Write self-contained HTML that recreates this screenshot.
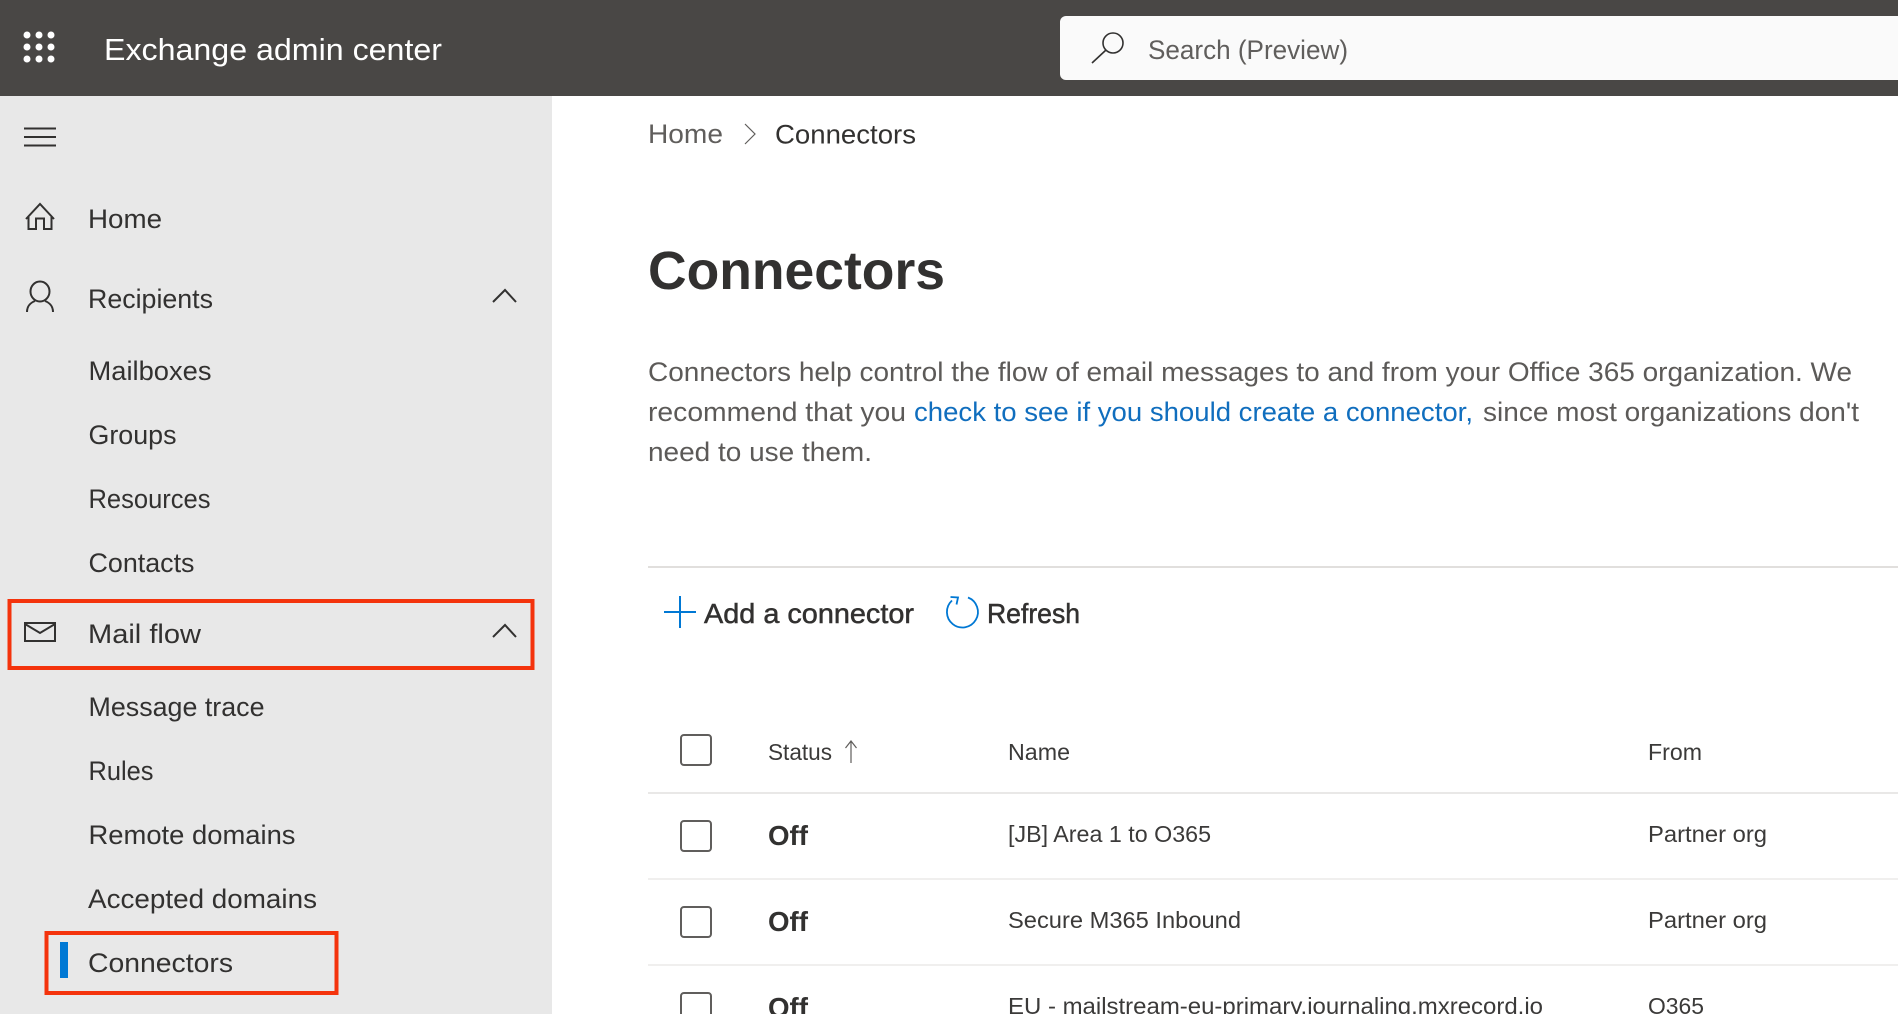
<!DOCTYPE html>
<html><head><meta charset="utf-8"><title>Exchange admin center</title>
<style>
html,body{margin:0;padding:0;width:1898px;height:1014px;overflow:hidden;background:#fff}
svg{display:block}
text{font-family:"Liberation Sans",sans-serif;}
.n{font-size:27px;fill:#323130}
.p{font-size:27px;fill:#5c5a58}
.t{font-size:23px;fill:#3b3a39}
.s{font-size:28px;fill:#323130;font-weight:bold}
.i{fill:none;stroke:#323130;stroke-width:2}
</style></head><body>
<svg width="1898" height="1014" viewBox="0 0 1898 1014" xmlns="http://www.w3.org/2000/svg">
<defs><clipPath id="c"><rect width="1898" height="1014"/></clipPath></defs>
<g clip-path="url(#c)">
<rect width="1898" height="1014" fill="#fff"/>
<rect width="552" height="918" y="96" fill="#e8e8e8"/>
<rect width="1898" height="96" fill="#494745"/>
<!-- waffle -->
<g fill="#fff">
<circle cx="27" cy="35" r="3.500"/><circle cx="39" cy="35" r="3.500"/><circle cx="51" cy="35" r="3.500"/>
<circle cx="27" cy="47" r="3.500"/><circle cx="39" cy="47" r="3.500"/><circle cx="51" cy="47" r="3.500"/>
<circle cx="27" cy="59" r="3.500"/><circle cx="39" cy="59" r="3.500"/><circle cx="51" cy="59" r="3.500"/>
</g>
<text x="104" y="60" font-size="31" fill="#fff" textLength="338" lengthAdjust="spacingAndGlyphs">Exchange admin center</text>
<!-- search -->
<rect x="1060" y="16" width="860" height="64" rx="6" fill="#fafafa"/>
<circle cx="1113" cy="43" r="10" fill="none" stroke="#323130" stroke-width="1.600"/>
<path d="M1106 50 L1092 63" fill="none" stroke="#323130" stroke-width="1.600"/>
<text x="1148" y="59" font-size="27" fill="#605e5c" textLength="200" lengthAdjust="spacingAndGlyphs">Search (Preview)</text>
<!-- hamburger -->
<path class="i" d="M24 128.500H56M24 137H56M24 145.500H56"/>
<!-- home -->
<path class="i" d="M26 219L40 204L54 219M28.500 217V229H36V218.500H44V229H51.500V217"/>
<text class="n" x="88" y="228" textLength="74" lengthAdjust="spacingAndGlyphs">Home</text>
<!-- person -->
<ellipse class="i" cx="40" cy="291.500" rx="9.500" ry="10"/>
<path class="i" d="M27 312C27 306 31 302.500 35 301M53 312C53 306 49 302.500 45 301"/>
<text class="n" x="88" y="308" textLength="125" lengthAdjust="spacingAndGlyphs">Recipients</text>
<path class="i" d="M493 302L505 290L516 302"/>
<text class="n" x="88.500" y="380" textLength="123" lengthAdjust="spacingAndGlyphs">Mailboxes</text>
<text class="n" x="88.500" y="444" textLength="88" lengthAdjust="spacingAndGlyphs">Groups</text>
<text class="n" x="88.500" y="508" textLength="122" lengthAdjust="spacingAndGlyphs">Resources</text>
<text class="n" x="88.500" y="572" textLength="106" lengthAdjust="spacingAndGlyphs">Contacts</text>
<!-- mail -->
<rect class="i" x="25" y="623" width="30" height="18"/>
<path class="i" d="M25 624L40 633L55 624"/>
<text class="n" x="88" y="643" textLength="113" lengthAdjust="spacingAndGlyphs">Mail flow</text>
<path class="i" d="M493 637L505 625L516 637"/>
<rect x="9.500" y="601" width="523" height="67" fill="none" stroke="#f4330c" stroke-width="4"/>
<text class="n" x="88.500" y="716" textLength="176" lengthAdjust="spacingAndGlyphs">Message trace</text>
<text class="n" x="88.500" y="780" textLength="65" lengthAdjust="spacingAndGlyphs">Rules</text>
<text class="n" x="88.500" y="844" textLength="207" lengthAdjust="spacingAndGlyphs">Remote domains</text>
<text class="n" x="88" y="908" textLength="229" lengthAdjust="spacingAndGlyphs">Accepted domains</text>
<text class="n" x="88" y="972" textLength="145" lengthAdjust="spacingAndGlyphs">Connectors</text>
<rect x="60" y="942" width="8" height="36" fill="#0078d4"/>
<rect x="46.500" y="933" width="290" height="60" fill="none" stroke="#f4330c" stroke-width="4"/>
<!-- breadcrumb -->
<text x="648" y="143" font-size="27" fill="#605e5c" textLength="75" lengthAdjust="spacingAndGlyphs">Home</text>
<path d="M745 124L755 134L745 144" fill="none" stroke="#605e5c" stroke-width="1.200"/>
<text class="n" x="775" y="143.500" textLength="141" lengthAdjust="spacingAndGlyphs">Connectors</text>
<!-- heading -->
<text x="648" y="289" font-size="54" font-weight="bold" fill="#323130" textLength="297" lengthAdjust="spacingAndGlyphs">Connectors</text>
<!-- paragraph -->
<text class="p" x="648" y="381" textLength="1204" lengthAdjust="spacingAndGlyphs">Connectors help control the flow of email messages to and from your Office 365 organization. We</text>
<text class="p" x="648" y="421" textLength="258" lengthAdjust="spacingAndGlyphs">recommend that you</text>
<text x="914" y="421" font-size="27" fill="#106ebe" textLength="559" lengthAdjust="spacingAndGlyphs">check to see if you should create a connector,</text>
<text class="p" x="1483" y="421" textLength="376" lengthAdjust="spacingAndGlyphs">since most organizations don't</text>
<text class="p" x="648" y="461" textLength="224" lengthAdjust="spacingAndGlyphs">need to use them.</text>
<rect x="648" y="566" width="1250" height="2" fill="#e1dfdd"/>
<!-- toolbar -->
<path d="M664 612H696M680 596V628" fill="none" stroke="#0078d4" stroke-width="2"/>
<text x="704" y="623" font-size="28" fill="#323130" stroke="#323130" stroke-width=".5" textLength="210" lengthAdjust="spacingAndGlyphs">Add a connector</text>
<path d="M968 597.500A15.500 15.500 0 1 1 952 600.500" fill="none" stroke="#0078d4" stroke-width="1.800"/>
<path d="M950.500 597L958 597.500L956.500 604.500" fill="none" stroke="#0078d4" stroke-width="1.800"/>
<text x="987" y="623" font-size="28" fill="#323130" stroke="#323130" stroke-width=".5" textLength="93" lengthAdjust="spacingAndGlyphs">Refresh</text>
<!-- table -->
<rect x="681" y="735" width="30" height="30" rx="3" fill="none" stroke="#605e5c" stroke-width="2"/>
<text class="t" x="768" y="760" textLength="64" lengthAdjust="spacingAndGlyphs">Status</text>
<path d="M851 763V741M845.500 748L851 741L856.500 748" fill="none" stroke="#605e5c" stroke-width="1.200"/>
<text class="t" x="1008" y="760" textLength="62" lengthAdjust="spacingAndGlyphs">Name</text>
<text class="t" x="1648" y="760" textLength="54" lengthAdjust="spacingAndGlyphs">From</text>
<rect x="648" y="792" width="1250" height="2" fill="#e9e8e7"/>
<rect x="681" y="821" width="30" height="30" rx="3" fill="none" stroke="#605e5c" stroke-width="2"/>
<text class="s" x="768" y="845" textLength="40" lengthAdjust="spacingAndGlyphs">Off</text>
<text class="t" x="1008" y="842" textLength="203" lengthAdjust="spacingAndGlyphs">[JB] Area 1 to O365</text>
<text class="t" x="1648" y="842" textLength="119" lengthAdjust="spacingAndGlyphs">Partner org</text>
<rect x="648" y="878" width="1250" height="2" fill="#f0efee"/>
<rect x="681" y="907" width="30" height="30" rx="3" fill="none" stroke="#605e5c" stroke-width="2"/>
<text class="s" x="768" y="931" textLength="40" lengthAdjust="spacingAndGlyphs">Off</text>
<text class="t" x="1008" y="928" textLength="233" lengthAdjust="spacingAndGlyphs">Secure M365 Inbound</text>
<text class="t" x="1648" y="928" textLength="119" lengthAdjust="spacingAndGlyphs">Partner org</text>
<rect x="648" y="964" width="1250" height="2" fill="#f0efee"/>
<rect x="681" y="993" width="30" height="30" rx="3" fill="none" stroke="#605e5c" stroke-width="2"/>
<text class="s" x="768" y="1017" textLength="40" lengthAdjust="spacingAndGlyphs">Off</text>
<text class="t" x="1008" y="1014" textLength="535" lengthAdjust="spacingAndGlyphs">EU - mailstream-eu-primary.journaling.mxrecord.io</text>
<text class="t" x="1648" y="1014" textLength="56" lengthAdjust="spacingAndGlyphs">O365</text>
</g>
</svg>
</body></html>
